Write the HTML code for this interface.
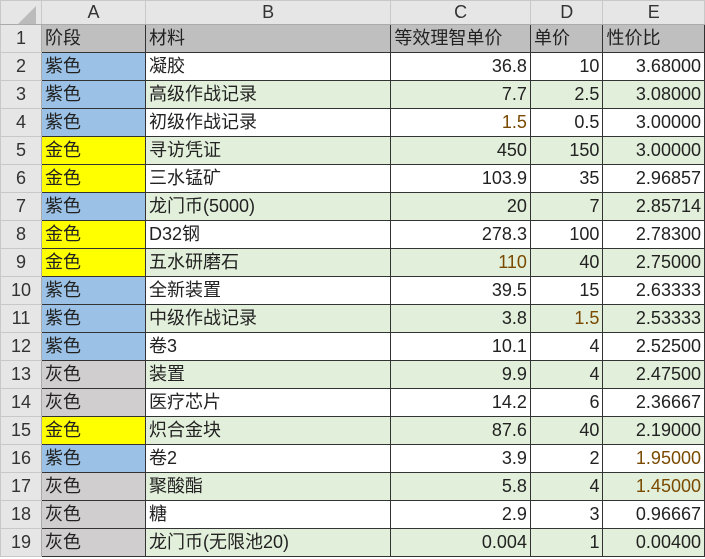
<!DOCTYPE html>
<html><head><meta charset="utf-8"><style>
body{margin:0;width:705px;height:559px;overflow:hidden;background:#fff;font-family:"Liberation Sans","Noto Sans CJK SC",sans-serif;}
table{border-collapse:collapse;table-layout:fixed;position:absolute;left:0;top:0;}
td{height:27px;padding:0 3px;font-size:18px;color:#222;border:1px solid #333;white-space:nowrap;overflow:hidden;line-height:27px}
tr.h td{height:23px;background:#e6e6e6;color:#333;text-align:center;border:1px solid #c8c8c8;border-bottom:1px solid #aaa;font-size:18px;line-height:23px}
td.rh{background:#e6e6e6;text-align:center;border:1px solid #c8c8c8;border-right:1px solid #aaa;color:#333;padding:0}
tr.t td.c{background:#bfbfbf}
td.n{text-align:right}
.p{background:#9bc2e6}.g{background:#ffff00}.y{background:#d0cece}
tr.s td.c:not(.p):not(.g):not(.y){background:#e2efda}
.o{color:#7a4a00}
</style></head><body>
<table>
<colgroup><col style="width:38px"><col style="width:105px"><col style="width:247px"><col style="width:140px"><col style="width:73px"><col style="width:102px"></colgroup>
<tr class="h"><td style="background:#e6e6e6"><svg width="30" height="20" style="display:block;margin:2px 0 0 4px"><polygon points="28,2 28,20 10,20" fill="#bbb"/></svg></td><td>A</td><td>B</td><td>C</td><td>D</td><td>E</td></tr>
<tr class="t"><td class="rh">1</td><td class="c">阶段</td><td class="c">材料</td><td class="c">等效理智单价</td><td class="c">单价</td><td class="c">性价比</td></tr>
<tr><td class="rh">2</td><td class="c p">紫色</td><td class="c">凝胶</td><td class="c n">36.8</td><td class="c n">10</td><td class="c n">3.68000</td></tr>
<tr class="s"><td class="rh">3</td><td class="c p">紫色</td><td class="c">高级作战记录</td><td class="c n">7.7</td><td class="c n">2.5</td><td class="c n">3.08000</td></tr>
<tr><td class="rh">4</td><td class="c p">紫色</td><td class="c">初级作战记录</td><td class="c n o">1.5</td><td class="c n">0.5</td><td class="c n">3.00000</td></tr>
<tr class="s"><td class="rh">5</td><td class="c g">金色</td><td class="c">寻访凭证</td><td class="c n">450</td><td class="c n">150</td><td class="c n">3.00000</td></tr>
<tr><td class="rh">6</td><td class="c g">金色</td><td class="c">三水锰矿</td><td class="c n">103.9</td><td class="c n">35</td><td class="c n">2.96857</td></tr>
<tr class="s"><td class="rh">7</td><td class="c p">紫色</td><td class="c">龙门币(5000)</td><td class="c n">20</td><td class="c n">7</td><td class="c n">2.85714</td></tr>
<tr><td class="rh">8</td><td class="c g">金色</td><td class="c">D32钢</td><td class="c n">278.3</td><td class="c n">100</td><td class="c n">2.78300</td></tr>
<tr class="s"><td class="rh">9</td><td class="c g">金色</td><td class="c">五水研磨石</td><td class="c n o">110</td><td class="c n">40</td><td class="c n">2.75000</td></tr>
<tr><td class="rh">10</td><td class="c p">紫色</td><td class="c">全新装置</td><td class="c n">39.5</td><td class="c n">15</td><td class="c n">2.63333</td></tr>
<tr class="s"><td class="rh">11</td><td class="c p">紫色</td><td class="c">中级作战记录</td><td class="c n">3.8</td><td class="c n o">1.5</td><td class="c n">2.53333</td></tr>
<tr><td class="rh">12</td><td class="c p">紫色</td><td class="c">卷3</td><td class="c n">10.1</td><td class="c n">4</td><td class="c n">2.52500</td></tr>
<tr class="s"><td class="rh">13</td><td class="c y">灰色</td><td class="c">装置</td><td class="c n">9.9</td><td class="c n">4</td><td class="c n">2.47500</td></tr>
<tr><td class="rh">14</td><td class="c y">灰色</td><td class="c">医疗芯片</td><td class="c n">14.2</td><td class="c n">6</td><td class="c n">2.36667</td></tr>
<tr class="s"><td class="rh">15</td><td class="c g">金色</td><td class="c">炽合金块</td><td class="c n">87.6</td><td class="c n">40</td><td class="c n">2.19000</td></tr>
<tr><td class="rh">16</td><td class="c p">紫色</td><td class="c">卷2</td><td class="c n">3.9</td><td class="c n">2</td><td class="c n o">1.95000</td></tr>
<tr class="s"><td class="rh">17</td><td class="c y">灰色</td><td class="c">聚酸酯</td><td class="c n">5.8</td><td class="c n">4</td><td class="c n o">1.45000</td></tr>
<tr><td class="rh">18</td><td class="c y">灰色</td><td class="c">糖</td><td class="c n">2.9</td><td class="c n">3</td><td class="c n">0.96667</td></tr>
<tr class="s"><td class="rh">19</td><td class="c y">灰色</td><td class="c">龙门币(无限池20)</td><td class="c n">0.004</td><td class="c n">1</td><td class="c n">0.00400</td></tr>
</table>
</body></html>
